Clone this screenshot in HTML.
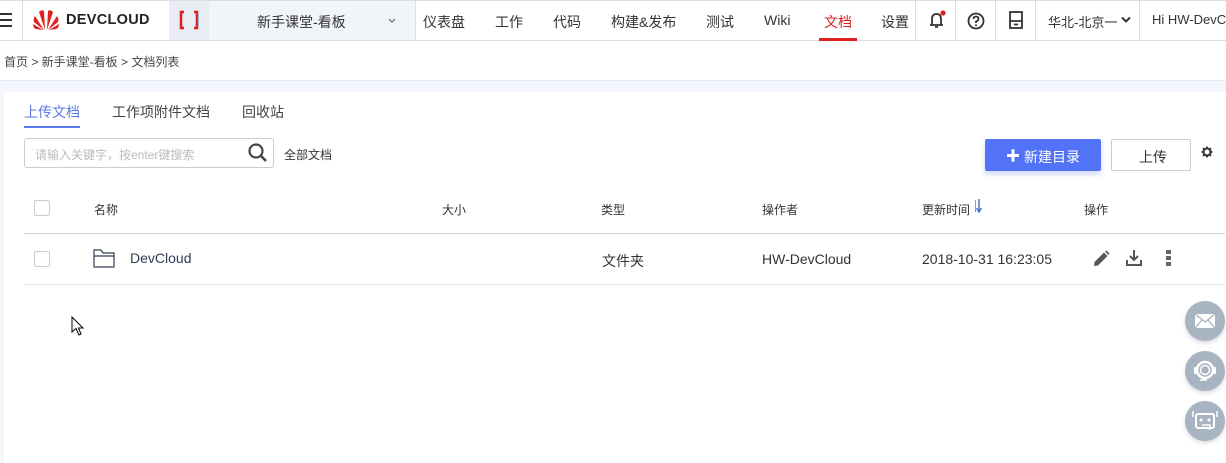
<!DOCTYPE html>
<html><head><meta charset="utf-8"><style>
*{margin:0;padding:0;box-sizing:border-box}
body{width:1226px;height:463px;overflow:hidden;background:#fff;font-family:"Liberation Sans","Noto Sans CJK SC",sans-serif;color:#333;position:relative;font-size:13px}
.a{position:absolute;white-space:nowrap}
.vl{position:absolute;top:0;width:1px;height:40px;background:#ddd}
.nav{font-size:14px;top:12px;color:#333}
.cb{position:absolute;width:16px;height:16px;border:1px solid #ccc;border-radius:2px;background:#fff}
</style></head><body>
<div class="a" style="left:0;top:0;width:1226px;height:41px;border-bottom:1px solid #ddd;border-top:1px solid #ddd"></div>
<div class="a" style="left:0;top:13px;width:12px;height:2px;background:#333"></div>
<div class="a" style="left:0;top:19px;width:12px;height:2px;background:#333"></div>
<div class="a" style="left:0;top:25px;width:12px;height:2px;background:#333"></div>
<div class="vl" style="left:22px"></div>
<svg class="a" style="left:33px;top:9px" width="26" height="22" viewBox="0 0 26 22"><g fill="#e0201c"><path d="M12 21 L6 3 Q9 0 11 2Z"/><path d="M14 21 L20 3 Q17 0 15 2Z"/><path d="M11 21 L2 7 Q0 10 1 13Z"/><path d="M15 21 L24 7 Q26 10 25 13Z"/><path d="M10 21 L0 15 Q0 19 3 20Z"/><path d="M16 21 L26 15 Q26 19 23 20Z"/></g></svg>
<div class="a" style="left:66px;top:12px;font-size:14.5px;font-weight:bold;letter-spacing:0.3px;color:#222">DEVCLOUD</div>
<div class="a" style="left:169px;top:1px;width:40px;height:39px;background:#e8edf3"></div>
<svg class="a" style="left:178px;top:10px" width="22" height="20" viewBox="0 0 22 20"><path d="M6 2 H3 V18 H6 M16 2 H19 V18 H16" fill="none" stroke="#d82020" stroke-width="2.5"/><path d="M20 3 V17" stroke="#4a7bd0" stroke-width="1"/></svg>
<div class="a" style="left:209px;top:1px;width:206px;height:39px;background:#f1f4f8"></div>
<div class="a" style="left:257px;top:12px;font-size:14px">新手课堂-看板</div>
<svg class="a" style="left:388px;top:18px" width="8" height="6" viewBox="0 0 8 6"><path d="M1 1 L4 4 L7 1" fill="none" stroke="#666" stroke-width="1.2"/></svg>
<div class="vl" style="left:415px"></div>
<div class="a nav" style="left:423px">仪表盘</div>
<div class="a nav" style="left:495px">工作</div>
<div class="a nav" style="left:553px">代码</div>
<div class="a nav" style="left:611px">构建&amp;发布</div>
<div class="a nav" style="left:706px">测试</div>
<div class="a nav" style="left:764px">Wiki</div>
<div class="a nav" style="left:824px;color:#e02020">文档</div>
<div class="a" style="left:819px;top:38px;width:38px;height:3px;background:#e02020"></div>
<div class="a nav" style="left:881px">设置</div>
<div class="vl" style="left:915px"></div><div class="vl" style="left:955px"></div><div class="vl" style="left:995px"></div><div class="vl" style="left:1035px"></div><div class="vl" style="left:1139px"></div>
<svg class="a" style="left:927px;top:10px" width="20" height="20" viewBox="0 0 20 20"><path d="M5 15 V9 Q5 4 9.5 4 Q14 4 14 9 V15 M3 15 H16 M8 17 H11" fill="none" stroke="#333" stroke-width="1.8"/><circle cx="16" cy="3" r="2.6" fill="#e02020"/></svg>
<svg class="a" style="left:967px;top:12px" width="18" height="18" viewBox="0 0 18 18"><circle cx="9" cy="9" r="7.5" fill="none" stroke="#333" stroke-width="1.8"/><path d="M6.5 7 Q6.5 4.5 9 4.5 Q11.5 4.5 11.5 7 Q11.5 8.5 9 9.5 V11" fill="none" stroke="#333" stroke-width="1.8"/><circle cx="9" cy="13.3" r="1" fill="#333"/></svg>
<svg class="a" style="left:1009px;top:11px" width="14" height="18" viewBox="0 0 14 18"><rect x="1" y="1" width="12" height="16" fill="none" stroke="#333" stroke-width="1.8"/><path d="M1 10 H13 M5 13.5 H9" stroke="#333" stroke-width="1.8"/></svg>
<div class="a" style="left:1048px;top:12px;font-size:13px">华北-北京一</div>
<svg class="a" style="left:1121px;top:16px" width="10" height="8" viewBox="0 0 10 8"><path d="M1 1.5 L5 5.5 L9 1.5" fill="none" stroke="#333" stroke-width="2"/></svg>
<div class="a" style="left:1152px;top:12px;font-size:13px">Hi HW-DevC.</div>
<div class="a" style="left:4px;top:53px;font-size:12px;color:#444">首页 &gt; 新手课堂-看板 &gt; 文档列表</div>
<div class="a" style="left:0;top:80px;width:1226px;height:383px;background:#f3f6fc;border-top:1px solid #e6e9f0"></div>
<div class="a" style="left:4px;top:92px;width:1222px;height:371px;background:#fff"></div>
<div class="a" style="left:24px;top:102px;font-size:14px;color:#5a7be8">上传文档</div>
<div class="a" style="left:24px;top:126px;width:56px;height:2px;background:#5a7bf0"></div>
<div class="a" style="left:112px;top:102px;font-size:14px;color:#444">工作项附件文档</div>
<div class="a" style="left:242px;top:102px;font-size:14px;color:#444">回收站</div>
<div class="a" style="left:24px;top:138px;width:250px;height:30px;border:1px solid #ccc;border-radius:3px"></div>
<div class="a" style="left:35px;top:146px;font-size:12px;color:#bbb">请输入关键字，按enter键搜索</div>
<svg class="a" style="left:247px;top:142px" width="22" height="22" viewBox="0 0 22 22"><circle cx="9" cy="9" r="6.5" fill="none" stroke="#444" stroke-width="2.2"/><path d="M14 14 L19 19" stroke="#444" stroke-width="2.6"/></svg>
<div class="a" style="left:284px;top:146px;font-size:12px;color:#333">全部文档</div>
<div class="a" style="left:985px;top:139px;width:116px;height:32px;background:#5273f8;border-radius:2px;box-shadow:0 3px 6px rgba(82,115,248,.3)"></div>
<div class="a" style="left:1006px;top:146px;font-size:14px;color:#fff;font-weight:bold">✚</div>
<div class="a" style="left:1024px;top:147px;font-size:14px;color:#fff">新建目录</div>
<div class="a" style="left:1111px;top:139px;width:80px;height:32px;border:1px solid #ccc;border-radius:2px"></div>
<div class="a" style="left:1139px;top:147px;font-size:14px;color:#333">上传</div>
<svg class="a" style="left:1201px;top:146px" width="12" height="12" viewBox="0 0 12 12"><circle cx="6" cy="6" r="3.5" fill="none" stroke="#333" stroke-width="2"/><path d="M6 0.5 V3 M6 9 V11.5 M0.5 6 H3 M9 6 H11.5 M2 2 L3.7 3.7 M8.3 8.3 L10 10 M10 2 L8.3 3.7 M3.7 8.3 L2 10" stroke="#333" stroke-width="1.8"/></svg>
<div class="cb" style="left:34px;top:200px"></div>
<div class="a" style="left:94px;top:201px;font-size:12px">名称</div>
<div class="a" style="left:442px;top:201px;font-size:12px">大小</div>
<div class="a" style="left:601px;top:201px;font-size:12px">类型</div>
<div class="a" style="left:762px;top:201px;font-size:12px">操作者</div>
<div class="a" style="left:922px;top:201px;font-size:12px">更新时间</div>
<div class="a" style="left:975px;top:200px;width:1px;height:12px;background:#99a"></div>
<svg class="a" style="left:976px;top:199px" width="6" height="14" viewBox="0 0 6 14"><path d="M3 0 V12 M0.5 9 L3 13 L5.5 9" fill="none" stroke="#4a78d8" stroke-width="1.5"/></svg>
<div class="a" style="left:1084px;top:201px;font-size:12px">操作</div>
<div class="a" style="left:24px;top:233px;width:1201px;height:1px;background:#d0d0d0"></div>
<div class="cb" style="left:34px;top:251px"></div>
<svg class="a" style="left:93px;top:249px" width="22" height="19" viewBox="0 0 22 19"><path d="M1 1 H8 L10 4 H21 V18 H1 Z M1 7 H21" fill="none" stroke="#333a55" stroke-width="1.2"/></svg>
<div class="a" style="left:130px;top:250px;font-size:14px;color:#333a55">DevCloud</div>
<div class="a" style="left:602px;top:251px;font-size:14px">文件夹</div>
<div class="a" style="left:762px;top:251px;font-size:14px">HW-DevCloud</div>
<div class="a" style="left:922px;top:251px;font-size:14px">2018-10-31 16:23:05</div>
<svg class="a" style="left:1093px;top:250px" width="17" height="17" viewBox="0 0 17 17"><path d="M1 16 L1.5 12 L11 2.5 L14.5 6 L5 15.5 Z M12 1.5 L13.5 0.5 L16.5 3.5 L15.5 5Z" fill="#555"/></svg>
<svg class="a" style="left:1125px;top:249px" width="18" height="18" viewBox="0 0 18 18"><path d="M9 1 V11 M5 7 L9 11 L13 7 M2 11 V16 H16 V11" fill="none" stroke="#555" stroke-width="2"/></svg>
<div class="a" style="left:1166px;top:250px;width:5px;height:4px;background:#666"></div>
<div class="a" style="left:1166px;top:256px;width:5px;height:4px;background:#666"></div>
<div class="a" style="left:1166px;top:262px;width:5px;height:4px;background:#666"></div>
<div class="a" style="left:24px;top:284px;width:1201px;height:1px;background:#e4e4e4"></div>
<svg class="a" style="left:71px;top:316px" width="14" height="20" viewBox="0 0 14 20"><path d="M1 1 V16 L5 12.5 L8 19 L10 18 L7.5 12 H12 Z" fill="#fff" stroke="#000" stroke-width="1"/></svg>
<div class="a" style="left:1185px;top:301px;width:40px;height:40px;border-radius:50%;background:#a8b4c2;box-shadow:0 2px 4px rgba(0,0,0,.15)"></div>
<svg class="a" style="left:1194px;top:313px" width="22" height="16" viewBox="0 0 22 16"><rect x="1" y="1" width="20" height="14" fill="#fff"/><path d="M1 1 L11 9 L21 1 M1 15 L8 7 M21 15 L14 7" fill="none" stroke="#a8b4c2" stroke-width="1.3"/></svg>
<div class="a" style="left:1185px;top:351px;width:40px;height:40px;border-radius:50%;background:#a8b4c2;box-shadow:0 2px 4px rgba(0,0,0,.15)"></div>
<svg class="a" style="left:1191px;top:357px" width="28" height="28" viewBox="0 0 28 28"><circle cx="14" cy="13" r="8" fill="none" stroke="#fff" stroke-width="2.5"/><circle cx="14" cy="13" r="4.5" fill="none" stroke="#fff" stroke-width="1.5"/><rect x="3" y="10" width="3" height="7" rx="1" fill="#fff"/><rect x="22" y="10" width="3" height="7" rx="1" fill="#fff"/><path d="M9 23 H16" stroke="#fff" stroke-width="1.5"/></svg>
<div class="a" style="left:1185px;top:401px;width:40px;height:40px;border-radius:50%;background:#a8b4c2;box-shadow:0 2px 4px rgba(0,0,0,.15)"></div>
<svg class="a" style="left:1190px;top:408px" width="30" height="26" viewBox="0 0 30 26"><rect x="6" y="6" width="18" height="14" rx="2" fill="none" stroke="#fff" stroke-width="2"/><circle cx="11" cy="12" r="1.5" fill="#fff"/><circle cx="19" cy="12" r="1.5" fill="#fff"/><path d="M3 3 V9 M27 3 V9 M12 17 H20 V22" fill="none" stroke="#fff" stroke-width="1.5"/></svg>
</body></html>
